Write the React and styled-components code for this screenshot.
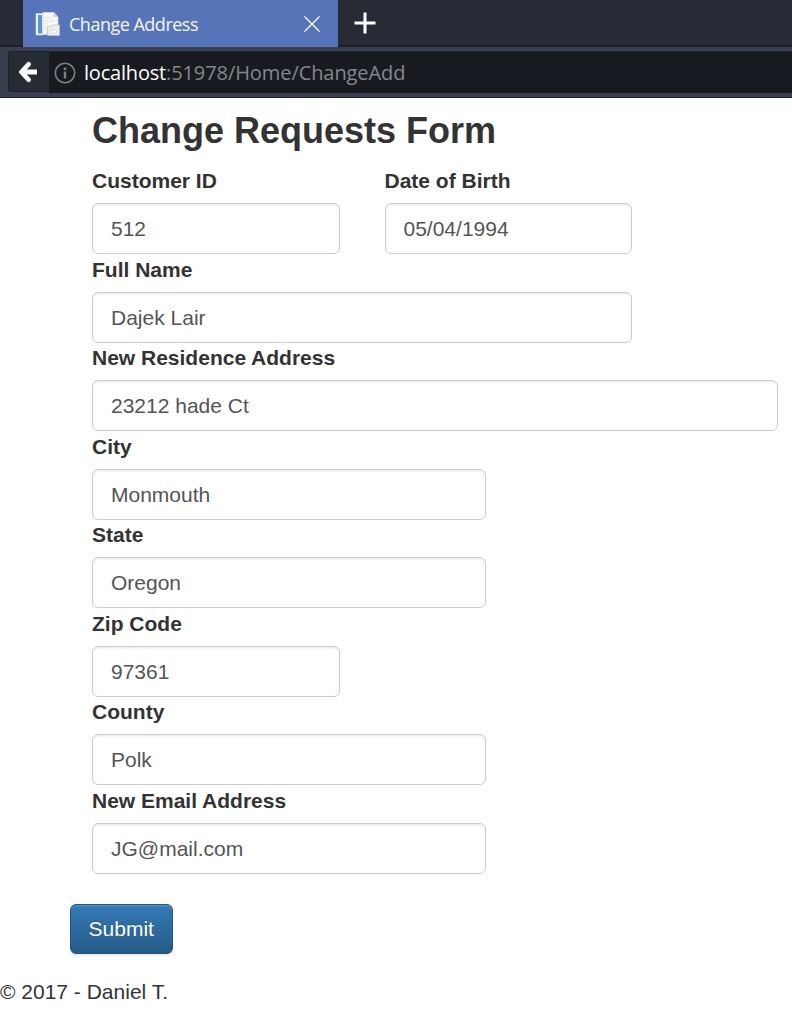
import React from 'react';
import styled, { createGlobalStyle } from 'styled-components';

const GlobalStyle = createGlobalStyle`
  * { box-sizing: border-box; }
  body {
    margin: 0;
    background: #fff;
    color: #333;
    font: 21px/30px "Liberation Sans", Arial, sans-serif;
    overflow: hidden;
  }
`;

const TabStrip = styled.div`
  display: flex;
  height: 47px;
  padding-left: 23px;
  background: linear-gradient(#272b35 45px, #1e2029 45px);
`;

const Tab = styled.div`
  display: flex;
  align-items: center;
  width: 315px;
  padding: 0 17px 0 12px;
  background: #5675b9;
  color: #f5f7fb;
  font: 18px/24px "Open Sans", "Noto Sans", sans-serif;
`;

const TabTitle = styled.span`
  flex: 1;
  margin-left: 9px;
  padding-top: 1px;
  letter-spacing: -0.5px;
  white-space: nowrap;
`;

const NewTab = styled.div`
  padding: 12px 0 0 16px;
  line-height: 0;
`;

const Toolbar = styled.div`
  display: flex;
  height: 51px;
  padding: 4px 0 0 8px;
  background: linear-gradient(#393f4f 50px, #1f222c 50px);
`;

const BackButton = styled.div`
  display: flex;
  align-items: center;
  justify-content: center;
  width: 41px;
  height: 41px;
  padding-right: 2px;
  border: 1px solid #1d2027;
  border-right: 0;
  border-radius: 3px 0 0 3px;
  background: #252c33;
`;

const UrlBar = styled.div`
  display: flex;
  align-items: center;
  flex: 1;
  height: 42px;
  padding-left: 5px;
  border-top: 1px solid #20242c;
  background: #171b1f;
  color: #858789;
  font: 20px/28px "Open Sans", "Noto Sans", sans-serif;
  white-space: nowrap;
`;

const Url = styled.span`
  margin-left: 8px;
  padding-top: 1px;
  letter-spacing: -0.08px;
`;

const Host = styled.span`
  color: #fff;
  letter-spacing: -0.2px;
`;

const Form = styled.form`
  padding: 13px 0 0 92px;
`;

const Title = styled.h2`
  margin: 0 0 15px;
  font-size: 36px;
  line-height: 40px;
`;

const Row = styled.div`
  display: flex;
  gap: 45px;
  height: 88.5px;
`;

const Field = styled.div`
  width: ${(p) => p.$width}px;
`;

const Label = styled.label`
  display: block;
  height: 30px;
  margin-bottom: 7.45px;
  font-weight: 700;
`;

const Input = styled.input`
  display: block;
  width: 100%;
  height: 51px;
  padding: 9.2px 18px 8.8px;
  border: 1px solid #ccc;
  border-radius: 6px;
  background: #fff;
  box-shadow: inset 0 1.5px 1.5px rgba(0, 0, 0, 0.075);
  color: #555;
  font: inherit;
`;

const SubmitButton = styled.button`
  display: block;
  width: 103px;
  height: 50px;
  margin: 30px 0 0 -22px;
  padding: 0 0.5px 0 0;
  border: 1px solid #245580;
  border-radius: 6px;
  background: linear-gradient(#337ab7, #265a88);
  box-shadow: inset 0 1.5px 0 rgba(255, 255, 255, 0.15), 0 1.5px 1.5px rgba(0, 0, 0, 0.075);
  color: #fff;
  font: inherit;
  text-shadow: 0 -1.5px 0 rgba(0, 0, 0, 0.2);
`;

const Footer = styled.footer`
  margin-top: 23px;
`;

function PageIcon() {
  return (
    <svg width="25" height="24" viewBox="0 0 25 24">
      <path d="M1 1.5h7v21.5H1z" fill="#f4f6f8" stroke="#d5dae0" strokeWidth=".6" />
      <path d="M3 3H7v18.5H3z" fill="#4f9fce" />
      <path d="M8 .5h11l4 4.5V22.5H8z" fill="#f8f8f7" stroke="#d4d5d6" strokeWidth=".8" />
      <path d="M18.5 .5v4.5h4.5z" fill="#cfd2d8" />
      <path d="M10 6h7M10 9h10M10 12h3M10 15h2M10 18h2" stroke="#dddfdf" />
      <path d="M12.5 14.5h3.5l1-1.5h7.5V23.5H12.5z" fill="#ededec" stroke="#bfc2c5" strokeWidth=".8" />
      <path d="M15.5 18.5h6v2.5h-6z" fill="#fff" stroke="#d5d6db" strokeWidth=".7" />
    </svg>
  );
}

function CloseIcon() {
  return (
    <svg width="18" height="18" viewBox="0 0 18 18" fill="none" stroke="#fff" strokeWidth="1.4">
      <path d="M1.5 1.5l15 15M16.5 1.5l-15 15" />
    </svg>
  );
}

function PlusIcon() {
  return (
    <svg width="22" height="22" viewBox="0 0 22 22" fill="none" stroke="#fff" strokeWidth="3">
      <path d="M11 .5v21M.5 11h21" />
    </svg>
  );
}

function BackIcon() {
  return (
    <svg width="20" height="22" viewBox="0 0 20 22" fill="none" stroke="#fff" strokeWidth="4.6" strokeLinejoin="round">
      <path d="M10.6 3.2L3.4 11l7.2 7.8" strokeLinecap="round" />
      <path d="M4 11h15" strokeWidth="5" />
    </svg>
  );
}

function InfoIcon() {
  return (
    <svg width="22" height="22" viewBox="0 0 22 22" fill="none" stroke="#7d8083">
      <circle cx="11" cy="11" r="9.7" strokeWidth="1.6" />
      <path d="M11 9.5V16.5" strokeWidth="2.4" />
      <path d="M11 5.5V8" strokeWidth="2.6" />
    </svg>
  );
}

const fields = [
  [['Customer ID', '512', 247.5], ['Date of Birth', '05/04/1994', 247.5]],
  [['Full Name', 'Dajek Lair', 540]],
  [['New Residence Address', '23212 hade Ct', 686]],
  [['City', 'Monmouth', 394]],
  [['State', 'Oregon', 394]],
  [['Zip Code', '97361', 247.5]],
  [['County', 'Polk', 394]],
  [['New Email Address', 'JG@mail.com', 394]],
];

export default function App() {
  return (
    <>
      <GlobalStyle />
      <TabStrip>
        <Tab>
          <PageIcon />
          <TabTitle>Change Address</TabTitle>
          <CloseIcon />
        </Tab>
        <NewTab>
          <PlusIcon />
        </NewTab>
      </TabStrip>
      <Toolbar>
        <BackButton>
          <BackIcon />
        </BackButton>
        <UrlBar>
          <InfoIcon />
          <Url>
            <Host>localhost</Host>:51978/Home/ChangeAdd
          </Url>
        </UrlBar>
      </Toolbar>
      <Form onSubmit={(e) => e.preventDefault()}>
        <Title>Change Requests Form</Title>
        {fields.map((row) => (
          <Row key={row[0][0]}>
            {row.map(([label, value, width]) => (
              <Field key={label} $width={width}>
                <Label>{label}</Label>
                <Input type="text" defaultValue={value} />
              </Field>
            ))}
          </Row>
        ))}
        <SubmitButton type="submit">Submit</SubmitButton>
      </Form>
      <Footer>© 2017 - Daniel T.</Footer>
    </>
  );
}
